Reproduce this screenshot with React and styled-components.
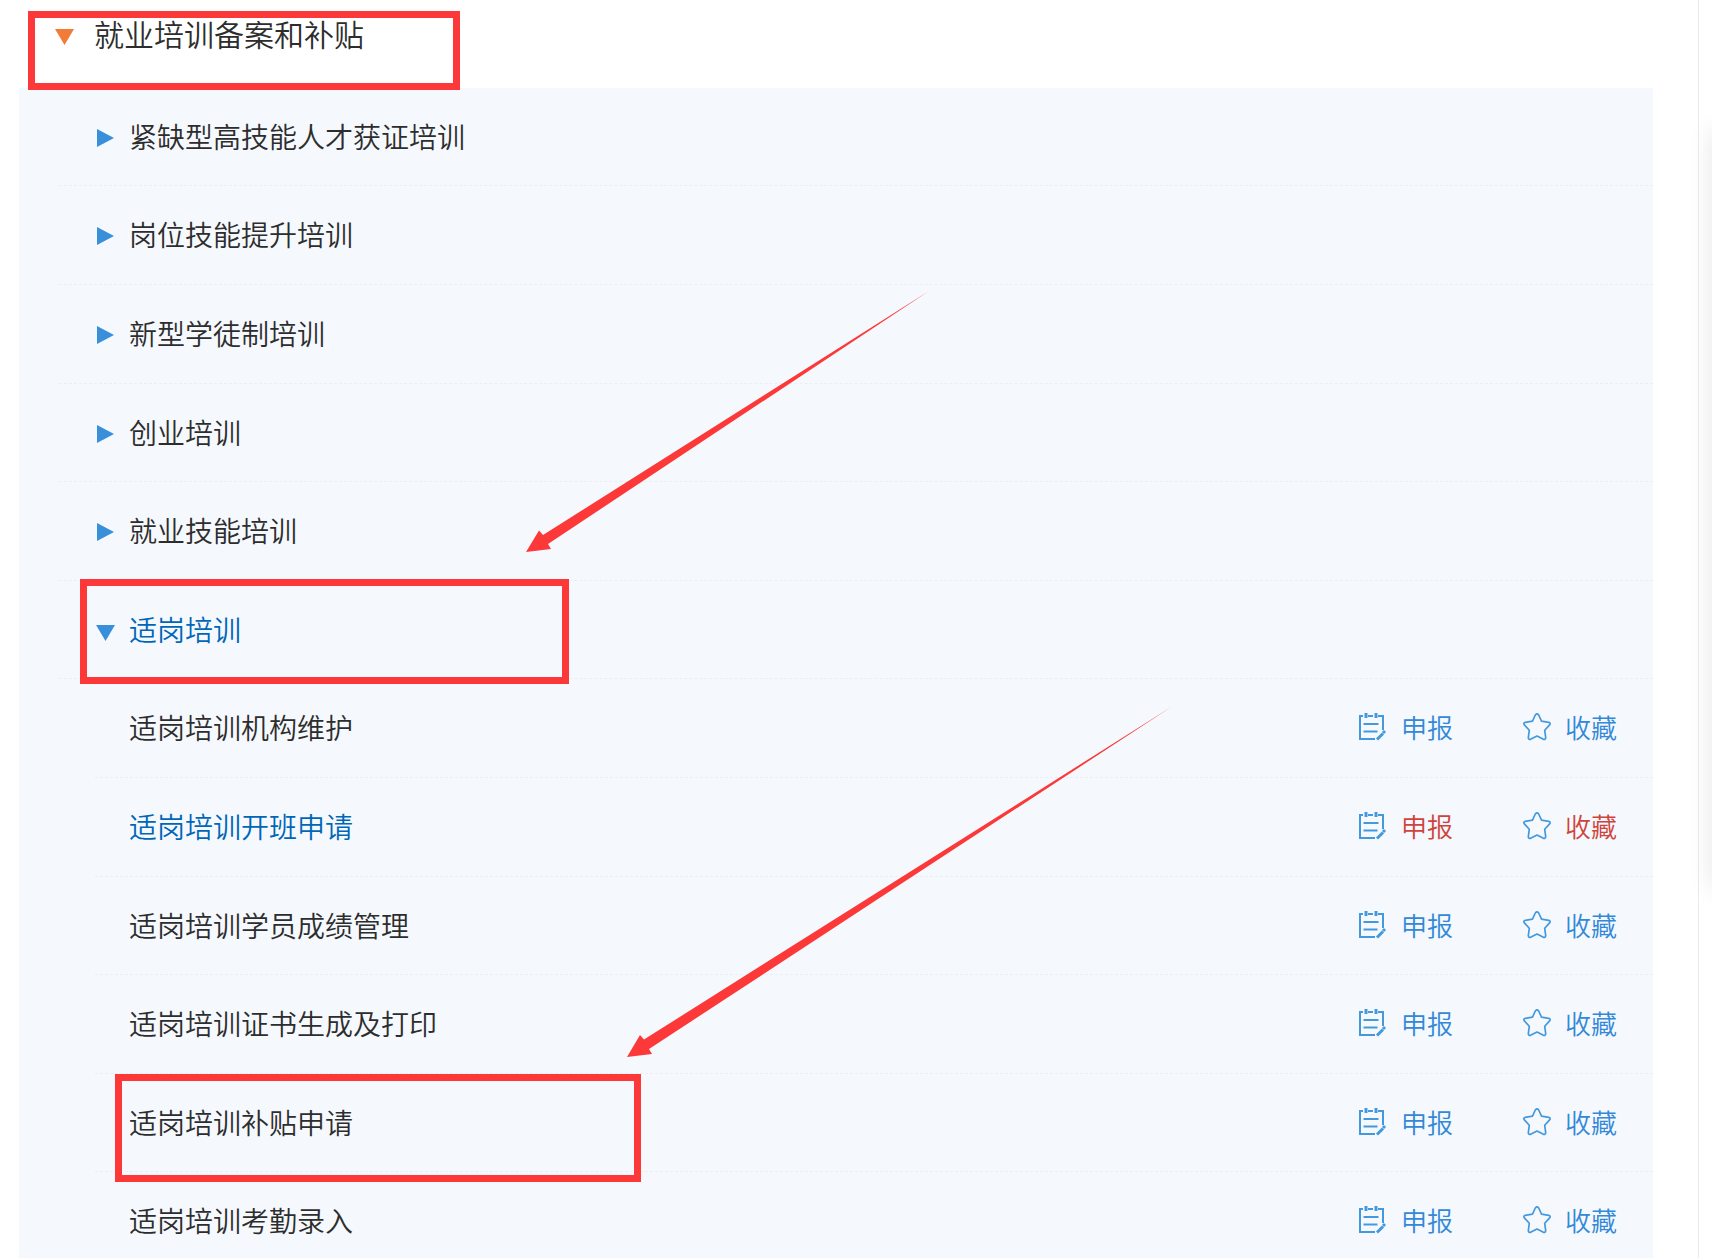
import styled, { createGlobalStyle } from 'styled-components';

// Style
const GlobalStyle = createGlobalStyle`
	* {
		box-sizing: border-box;
	}

	body {
		margin: 0;
		background: #fff;
		color: #2d2d2d;
		font-family: 'Noto Sans CJK SC', sans-serif;
		font-weight: 350;
	}
`;

const Page = styled.div`
	position: relative;
	display: flex;
	min-height: 100vh;
	max-height: 100vh;
	overflow: hidden;

	/* Soft shadow of the panel docked past the right edge */
	&::after {
		content: '';
		position: absolute;
		top: 130px;
		bottom: 370px;
		left: 100%;
		width: 60px;
		box-shadow: 0 0 24px rgba(0, 0, 0, 0.1);
	}
`;

const Content = styled.main`
	flex: 1;
	padding: 0 45px 0 19px;
	border-right: 1px solid #ebebeb;
`;

const Gutter = styled.div`
	width: 13px;
`;

const Title = styled.h1`
	margin: 0;
	height: 88px;
	font-size: 30px;
	font-weight: 350;
	line-height: 66px;
`;

const Toggle = styled.button`
	display: flex;
	align-items: center;
	gap: ${(props) => (props.$large ? '20px' : '14px')};
	padding: 0 0 0 ${(props) => (props.$large ? '36px' : '37px')};
	border: 0;
	background: none;
	color: ${(props) => (props.$active ? '#0066b8' : 'inherit')};
	font: inherit;
	cursor: pointer;
`;

const Arrow = styled.svg`
	width: 19px;
	height: 28px;
	fill: ${(props) => props.$color || '#3a8fdb'};
`;

const Tree = styled.ul`
	margin: 0;
	padding: 0;
	list-style: none;
	background: #f5f9fe;
`;

const Row = styled.li`
	display: flex;
	align-items: center;
	justify-content: space-between;
	height: 99px;
	margin-left: ${(props) => (props.$leaf ? '76px' : '40px')};
	padding: 0 36px 2px 0;
	border-bottom: 1px dashed #eceff2;
	font-size: 28px;

	&:nth-child(5n + 1),
	&:nth-child(5n + 4) {
		height: 98px;
	}
`;

const Name = styled.span`
	padding-left: 34px;
	color: ${(props) => (props.$active ? '#0066b8' : 'inherit')};
`;

const Actions = styled.div`
	display: flex;
	gap: 70px;
`;

const Action = styled.a`
	display: flex;
	align-items: center;
	gap: 14px;
	color: ${(props) => (props.$active ? '#d0433c' : '#3388d8')};
	font-size: 26px;
	line-height: 36px;
	text-decoration: none;
`;

const Icon = styled.svg`
	width: 28px;
	height: 28px;
	fill: none;
	stroke: #4499dd;
	stroke-width: 2;
`;

// Marks drawn over the page
const Frame = styled.div`
	position: absolute;
	top: ${(props) => props.$top}px;
	left: ${(props) => props.$left}px;
	width: ${(props) => props.$width}px;
	height: ${(props) => props.$height}px;
	border: 7px solid #fc3838;
	pointer-events: none;
`;

const Pointers = styled.svg`
	position: absolute;
	top: 0;
	left: 0;
	width: 1200px;
	height: 1100px;
	fill: #fc3838;
	pointer-events: none;
`;

// Data
const groups = [
	{ name: '紧缺型高技能人才获证培训' },
	{ name: '岗位技能提升培训' },
	{ name: '新型学徒制培训' },
	{ name: '创业培训' },
	{ name: '就业技能培训' },
	{ name: '适岗培训', open: true },
];

const items = [
	{ name: '适岗培训机构维护' },
	{ name: '适岗培训开班申请', active: true },
	{ name: '适岗培训学员成绩管理' },
	{ name: '适岗培训证书生成及打印' },
	{ name: '适岗培训补贴申请' },
	{ name: '适岗培训考勤录入' },
];

const frames = [
	{ top: 11, left: 28, width: 432, height: 79 },
	{ top: 579, left: 80, width: 489, height: 105 },
	{ top: 1074, left: 115, width: 526, height: 108 },
];

// Components
const Caret = ({ open, color }) => (
	<Arrow viewBox="0 0 19 28" $color={color} aria-hidden="true">
		<path d={open ? 'M0 10h19l-9.500 16z' : 'M1 7l17 9-17 9z'} />
	</Arrow>
);

const FormIcon = () => (
	<Icon viewBox="0 0 28 28" aria-hidden="true">
		<path d="M4 3H1v23h15M9 3h5M19 3h5v14M4.500 11h15M4.500 18.500h14" />
		<path d="M7 0v5M17 0v5" strokeWidth="3" />
		<path d="M18 26.500l6-6" strokeWidth="3" />
		<path d="M24 20l2-2" strokeWidth="3" />
	</Icon>
);

const StarIcon = () => (
	<Icon viewBox="0 0 28 28" aria-hidden="true">
		<path
			d="M12.300 2q1.700-2.400 3.400 0L18.500 8.200 25.800 9.300q2.400 1 .6 2.800L21.700 17.300l1 7.300q-.3 2.500-2.700 1.500L14 23 8 26.100q-2.400 1-2.700-1.500l1-7.300L1.600 12.100q-1.800-1.800.6-2.800L9.500 8.200z"
			strokeWidth="1.700"
			strokeLinejoin="round"
		/>
	</Icon>
);

// Render
export default function App() {
	return (
		<Page>
			<GlobalStyle />
			<Content>
				<Title>
					<Toggle $large type="button" aria-expanded="true">
						<Caret open color="#f27b38" />
						就业培训备案和补贴
					</Toggle>
				</Title>
				<Tree>
					{groups.map(({ name, open }) => (
						<Row key={name}>
							<Toggle $active={open} type="button" aria-expanded={!!open}>
								<Caret open={open} />
								{name}
							</Toggle>
						</Row>
					))}
					{items.map(({ name, active }) => (
						<Row key={name} $leaf>
							<Name $active={active}>{name}</Name>
							<Actions>
								<Action href="#" $active={active}>
									<FormIcon />
									申报
								</Action>
								<Action href="#" $active={active}>
									<StarIcon />
									收藏
								</Action>
							</Actions>
						</Row>
					))}
				</Tree>
			</Content>
			<Gutter />

			{frames.map(({ top, left, width, height }) => (
				<Frame key={top} $top={top} $left={left} $width={width} $height={height} />
			))}
			<Pointers viewBox="0 0 1200 1100" aria-hidden="true">
				<path d="M929 291L543 535l-4-4.500L526 552l25-3-3-5z" />
				<path d="M1172 706.500L644 1039.500l-4-4.500L627 1057l25-3-3-5z" />
			</Pointers>
		</Page>
	);
}
